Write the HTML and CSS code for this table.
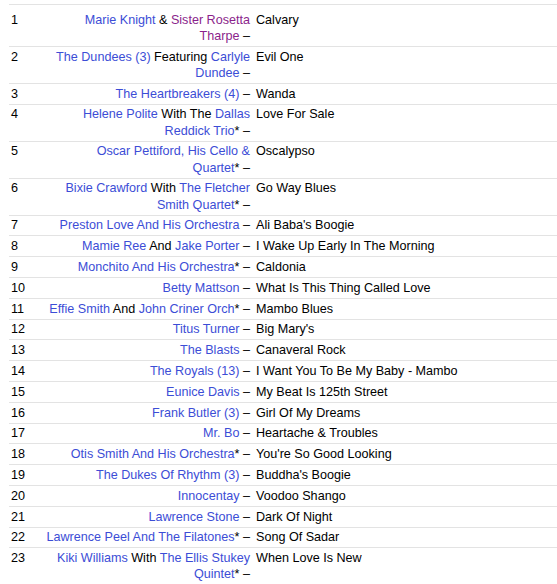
FILE: index.html
```html
<!DOCTYPE html>
<html>
<head>
<meta charset="utf-8">
<link rel="stylesheet" href="styles.css">
</head>
<body>
<div class="page">
<table class="tracklist">
<colgroup><col class="c-pos"><col class="c-art"><col class="c-title"></colgroup>
<tbody>
<tr><td class="pos">1</td><td class="artists"><a href="#">Marie Knight</a> &amp; <a class="visited" href="#">Sister Rosetta Tharpe</a>&nbsp;–</td><td class="title">Calvary</td></tr>
<tr><td class="pos">2</td><td class="artists"><a href="#">The Dundees (3)</a> Featuring <a href="#">Carlyle Dundee</a>&nbsp;–</td><td class="title">Evil One</td></tr>
<tr><td class="pos">3</td><td class="artists"><a href="#">The Heartbreakers (4)</a>&nbsp;–</td><td class="title">Wanda</td></tr>
<tr><td class="pos">4</td><td class="artists"><a href="#">Helene Polite</a> With The <a href="#">Dallas Reddick Trio</a>*&nbsp;–</td><td class="title">Love For Sale</td></tr>
<tr><td class="pos">5</td><td class="artists"><a href="#">Oscar Pettiford, His Cello &amp; Quartet</a>*&nbsp;–</td><td class="title">Oscalypso</td></tr>
<tr><td class="pos">6</td><td class="artists"><a href="#">Bixie Crawford</a> With <a href="#">The Fletcher Smith Quartet</a>*&nbsp;–</td><td class="title">Go Way Blues</td></tr>
<tr><td class="pos">7</td><td class="artists"><a href="#">Preston Love And His Orchestra</a>&nbsp;–</td><td class="title">Ali Baba's Boogie</td></tr>
<tr><td class="pos">8</td><td class="artists"><a href="#">Mamie Ree</a> And <a href="#">Jake Porter</a>&nbsp;–</td><td class="title">I Wake Up Early In The Morning</td></tr>
<tr><td class="pos">9</td><td class="artists"><a href="#">Monchito And His Orchestra</a>*&nbsp;–</td><td class="title">Caldonia</td></tr>
<tr><td class="pos">10</td><td class="artists"><a href="#">Betty Mattson</a>&nbsp;–</td><td class="title">What Is This Thing Called Love</td></tr>
<tr><td class="pos">11</td><td class="artists"><a href="#">Effie Smith</a> And <a href="#">John Criner Orch</a>*&nbsp;–</td><td class="title">Mambo Blues</td></tr>
<tr><td class="pos">12</td><td class="artists"><a href="#">Titus Turner</a>&nbsp;–</td><td class="title">Big Mary's</td></tr>
<tr><td class="pos">13</td><td class="artists"><a href="#">The Blasts</a>&nbsp;–</td><td class="title">Canaveral Rock</td></tr>
<tr><td class="pos">14</td><td class="artists"><a href="#">The Royals (13)</a>&nbsp;–</td><td class="title">I Want You To Be My Baby - Mambo</td></tr>
<tr><td class="pos">15</td><td class="artists"><a href="#">Eunice Davis</a>&nbsp;–</td><td class="title">My Beat Is 125th Street</td></tr>
<tr><td class="pos">16</td><td class="artists"><a href="#">Frank Butler (3)</a>&nbsp;–</td><td class="title">Girl Of My Dreams</td></tr>
<tr><td class="pos">17</td><td class="artists"><a href="#">Mr. Bo</a>&nbsp;–</td><td class="title">Heartache &amp; Troubles</td></tr>
<tr><td class="pos">18</td><td class="artists"><a href="#">Otis Smith And His Orchestra</a>*&nbsp;–</td><td class="title">You're So Good Looking</td></tr>
<tr><td class="pos">19</td><td class="artists"><a href="#">The Dukes Of Rhythm (3)</a>&nbsp;–</td><td class="title">Buddha's Boogie</td></tr>
<tr><td class="pos">20</td><td class="artists"><a href="#">Innocentay</a>&nbsp;–</td><td class="title">Voodoo Shango</td></tr>
<tr><td class="pos">21</td><td class="artists"><a href="#">Lawrence Stone</a>&nbsp;–</td><td class="title">Dark Of Night</td></tr>
<tr><td class="pos">22</td><td class="artists"><a href="#">Lawrence Peel And The Filatones</a>*&nbsp;–</td><td class="title">Song Of Sadar</td></tr>
<tr><td class="pos">23</td><td class="artists"><a href="#">Kiki Williams</a> With <a href="#">The Ellis Stukey Quintet</a>*&nbsp;–</td><td class="title">When Love Is New</td></tr>
</tbody>
</table>
</div>
</body>
</html>
```

FILE: styles.css
```css
html, body {
  margin: 0;
  background: #fff;
}
body {
  font-family: "Liberation Sans", Arial, Helvetica, sans-serif;
  font-size: 12.6px;
  color: #000;
}
.page {
  padding: 4px 0 0 9px;
}
.tracklist {
  border-collapse: collapse;
  table-layout: fixed;
  width: 548px;
}
.c-pos { width: 35px; }
.c-art { width: 208px; }
.c-title { width: 305px; }
.tracklist td {
  border-top: 1px solid #e3e3e3;
  padding: 1.8px 0;
  line-height: 16.2px;
  vertical-align: top;
}
.tracklist tr:first-child td {
  padding-top: 6.6px;
}
.tracklist td.pos {
  padding-left: 2px;
}
.tracklist td.artists {
  text-align: right;
  padding-right: 2px;
}
.tracklist td.title {
  padding-left: 4px;
}
.tracklist a {
  color: #3c4dd6;
  text-decoration: none;
}
.tracklist a.visited {
  color: #8b1f8b;
}
```
